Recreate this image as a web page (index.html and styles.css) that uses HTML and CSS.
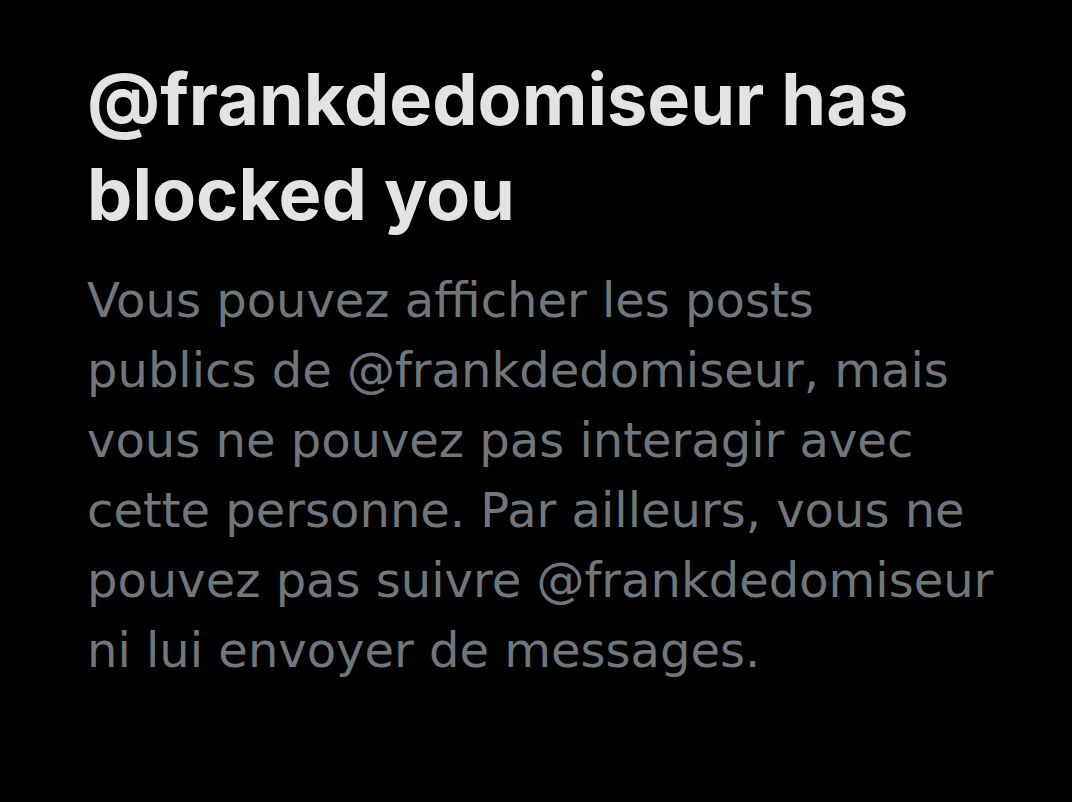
FILE: index.html
```html
<!DOCTYPE html>
<html lang="fr">
<head>
    <meta charset="UTF-8">
    <meta name="viewport" content="width=device-width, initial-scale=1.0">
    <title>Bloqué</title>
    <link rel="stylesheet" href="styles.css">
</head>
<body>

    <!-- Message de blocage -->
    <div class="blocked">
        <h1>@frankdedomiseur has blocked you</h1>
        <p>Vous pouvez afficher les posts publics de @frankdedomiseur, mais vous ne pouvez pas interagir avec cette personne. Par ailleurs, vous ne pouvez pas suivre @frankdedomiseur ni lui envoyer de messages.</p>
    </div>

</body>
</html>
```

FILE: styles.css
```css
/* Styles généraux */
body {
    margin: 0;
    padding: 0;
    background-color: #000;
    font-family: Inter, "Liberation Sans", Arial, sans-serif;
}

.blocked {
    padding: 51px 75px 0 87px;
}

.blocked h1 {
    margin: 0;
    font-size: 72px;
    line-height: 95px;
    font-weight: 700;
    color: #e1e3e4;
}

.blocked p {
    margin: 24px 0 0;
    font-family: "DejaVu Sans", Verdana, sans-serif;
    font-size: 48px;
    line-height: 70px;
    color: #71767b;
}
```
